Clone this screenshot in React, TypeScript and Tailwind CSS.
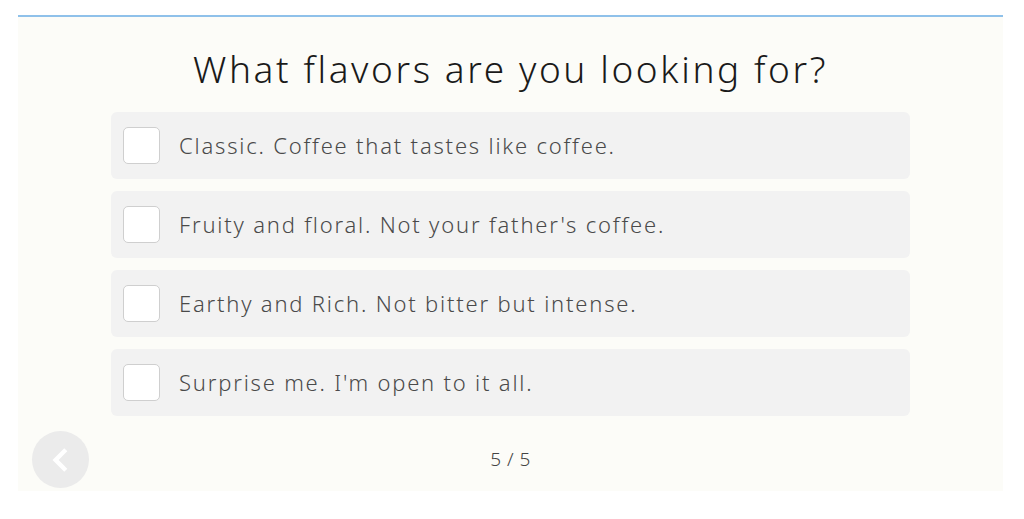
const options = [
  'Classic. Coffee that tastes like coffee.',
  "Fruity and floral. Not your father's coffee.",
  'Earthy and Rich. Not bitter but intense.',
  "Surprise me. I'm open to it all.",
];

function OptionRow({ label }: { label: string }) {
  return (
    <label className="flex items-center h-[67px] rounded-[6px] bg-[#f2f2f2] pl-[12px] cursor-pointer">
      <span className="w-[37px] h-[37px] rounded-[5px] bg-white border border-[#cfcfcf] shrink-0"></span>
      <span className="ml-[19px] text-[22px] text-[#4a4a4a] font-light tracking-[1.8px]">{label}</span>
    </label>
  );
}

export default function App() {
  return (
    <div className="min-h-[519px] bg-white pt-[15px] pl-[18px] font-['Noto_Sans',sans-serif]">
      <div className="w-[985px] h-[476px] border-t-2 border-[#8fc1ea] bg-[#fcfcf8] flex flex-col">
        <h1 className="mt-[30px] text-center text-[37px] leading-[44px] font-light tracking-[2.6px] text-[#1a1a1a]">
          What flavors are you looking for?
        </h1>

        <div className="mt-[21px] mx-auto w-[799px] flex flex-col gap-[12px]">
          {options.map((o) => (
            <OptionRow key={o} label={o} />
          ))}
        </div>

        <div className="mt-auto mb-[3px] grid grid-cols-[1fr_auto_1fr] items-center">
          <button className="ml-[14px] w-[57px] h-[57px] rounded-full bg-[#ebebeb] flex items-center justify-center">
            <svg width="26" height="26" viewBox="0 0 24 24" fill="none" stroke="white" strokeWidth="4" strokeLinecap="square">
              <path d="M15 4 L7 12 L15 20" />
            </svg>
          </button>
          <div className="text-[19px] text-[#444] font-light tracking-[0.5px]">5 / 5</div>
          <div></div>
        </div>
      </div>
    </div>
  );
}
